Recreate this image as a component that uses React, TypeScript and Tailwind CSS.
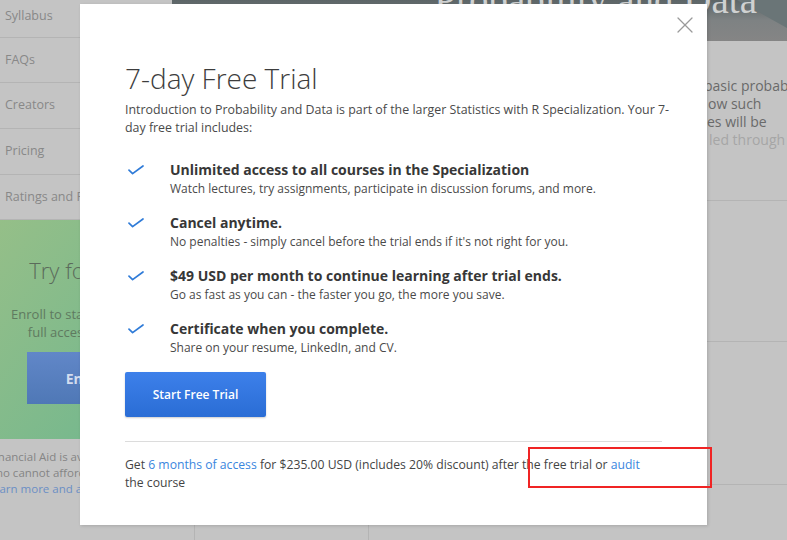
import { X } from "lucide-react";

const perks = [
  {
    title: "Unlimited access to all courses in the Specialization",
    text: "Watch lectures, try assignments, participate in discussion forums, and more.",
  },
  {
    title: "Cancel anytime.",
    text: "No penalties - simply cancel before the trial ends if it's not right for you.",
  },
  {
    title: "$49 USD per month to continue learning after trial ends.",
    text: "Go as fast as you can - the faster you go, the more you save.",
  },
  {
    title: "Certificate when you complete.",
    text: "Share on your resume, LinkedIn, and CV.",
  },
];

const navItems = [
  { label: "Syllabus", h: "h-[38px] pb-[4px]" },
  { label: "FAQs", h: "h-[45px]" },
  { label: "Creators", h: "h-[46px]" },
  { label: "Pricing", h: "h-[46px]" },
  { label: "Ratings and Reviews", h: "h-[45px]" },
];

const Check = () => (
  <svg width="16" height="10" viewBox="0 0 16 10" className="mt-[6px] ml-[3px] shrink-0">
    <path d="M1 5.2 L4.6 8.6 L15 1" fill="none" stroke="#2f7bd8" strokeWidth="1.7" strokeLinecap="round" strokeLinejoin="round" />
  </svg>
);

const App = () => {
  return (
    <div className="relative w-[787px] h-[540px] overflow-hidden bg-[#c4c4c4] font-['Open_Sans',sans-serif]">
      {/* page behind the overlay */}
      <div className="flex h-full">
        <div className="w-[172px] shrink-0 flex flex-col">
          {navItems.map((item) => (
            <div
              key={item.label}
              className={`flex items-center pl-[5px] border-b border-[#b4b4b4] text-[12.5px] text-[#888] whitespace-nowrap overflow-hidden ${item.h}`}
            >
              {item.label}
            </div>
          ))}
          <div className="h-[219px] flex flex-col items-center bg-gradient-to-br from-[#95bf88] to-[#6db68f]">
            <div className="mt-[34px] text-[22px] font-light text-[#5b6b5b]">Try for Free</div>
            <div className="mt-[18px] text-[13px] leading-[18px] text-[#5f7a60] text-center whitespace-nowrap">
              Enroll to start your 7-day
              <br />
              full access free trial
            </div>
            <div className="mt-[11px] w-[118px] h-[52px] flex items-center justify-center bg-gradient-to-b from-[#6187c8] to-[#4f78b6] text-[14px] font-bold text-[#d3ddef]">
              Enroll
            </div>
          </div>
          <div className="pt-[10px] text-[11.5px] leading-[16px] text-[#858585] whitespace-nowrap">
            <div className="-ml-[11px]">Financial Aid is available</div>
            <div className="-ml-[13px]">who cannot afford the fee.</div>
            <div className="-ml-[13px] text-[#6b8fc4]">Learn more and apply.</div>
          </div>
        </div>

        <div className="flex-1 min-w-0 flex flex-col overflow-hidden">
          <div className="relative h-[41px] shrink-0 flex justify-end overflow-hidden bg-gradient-to-b from-[#5c6567] via-[#7e8283] to-[#858585]">
            <svg className="absolute right-0 top-0" width="50" height="30" viewBox="0 0 50 30">
              <polygon points="0,0 50,0 50,28" fill="#6a7577" />
            </svg>
            <div className="relative -mt-[20px] pr-[30px] text-[39px] leading-none font-['Liberation_Serif',serif] text-[#cfd1d1] whitespace-nowrap">
              Probability and Data
            </div>
          </div>
          <div className="h-[160px] shrink-0 border-b border-[#b4b4b4] flex overflow-hidden">
            <div className="w-[532px] shrink-0" />
            <div className="pt-[36px] text-[14px] leading-[18px] text-[#6a6a6a] whitespace-nowrap">
              <div>basic probability</div>
              <div className="ml-[4px]">ow such</div>
              <div className="ml-[3px]">es will be</div>
              <div className="ml-[5px] text-[#a6a6a6]">led through</div>
            </div>
          </div>
          <div className="h-[141px] shrink-0 border-b border-[#b4b4b4]" />
          <div className="h-[143px] shrink-0 border-b border-[#b4b4b4]" />
          <div className="flex-1 grid grid-cols-[22px_174px_1fr]">
            <div />
            <div className="border-l border-[#b4b4b4]" />
            <div className="border-l border-[#b4b4b4]" />
          </div>
        </div>
      </div>

      {/* modal */}
      <div className="absolute left-[80px] top-[4px] w-[627px] h-[521px] bg-white shadow-[1px_1px_3px_rgba(0,0,0,0.15)] pt-[56px] px-[45px]">
        <button className="absolute right-[8px] top-[7px] text-[#9a9a9a]">
          <X size={28} strokeWidth={1.1} />
        </button>
        <h1 className="text-[28px] leading-[36px] font-light text-[#3d3d3d]">7-day Free Trial</h1>
        <p className="mt-[5px] -mr-[14px] text-[12.4px] leading-[18px] text-[#4a4a4a]">
          Introduction to Probability and Data is part of the larger Statistics with R Specialization. Your 7-day free trial includes:
        </p>
        <div className="mt-[22px] flex flex-col gap-[14px]">
          {perks.map((p) => (
            <div key={p.title} className="flex">
              <div className="w-[45px] shrink-0">
                <Check />
              </div>
              <div>
                <div className="text-[14px] leading-[21px] font-bold text-[#373737]">{p.title}</div>
                <div className="text-[12px] leading-[18px] text-[#4a4a4a]">{p.text}</div>
              </div>
            </div>
          ))}
        </div>
        <button className="mt-[15px] w-[141px] h-[45px] rounded-[2px] bg-gradient-to-b from-[#3d80ea] to-[#2a6dd5] text-white text-[12px] font-semibold shadow-[0_1px_2px_rgba(0,0,0,0.2)]">
          Start Free Trial
        </button>
        <div className="mt-[24px] border-t border-[#dcdcdc] pt-[14px] pr-[14px] text-[12.2px] leading-[18px] text-[#444]">
          Get <span className="text-[#3a86de]">6 months of access</span> for $235.00 USD (includes 20% discount) after the free trial or{" "}
          <span className="text-[#3a86de]">audit</span> the course
        </div>
      </div>

      {/* annotation */}
      <div className="absolute left-[528px] top-[447px] w-[184px] h-[41px] border-2 border-[#f02424]" />
    </div>
  );
};

export default App;
